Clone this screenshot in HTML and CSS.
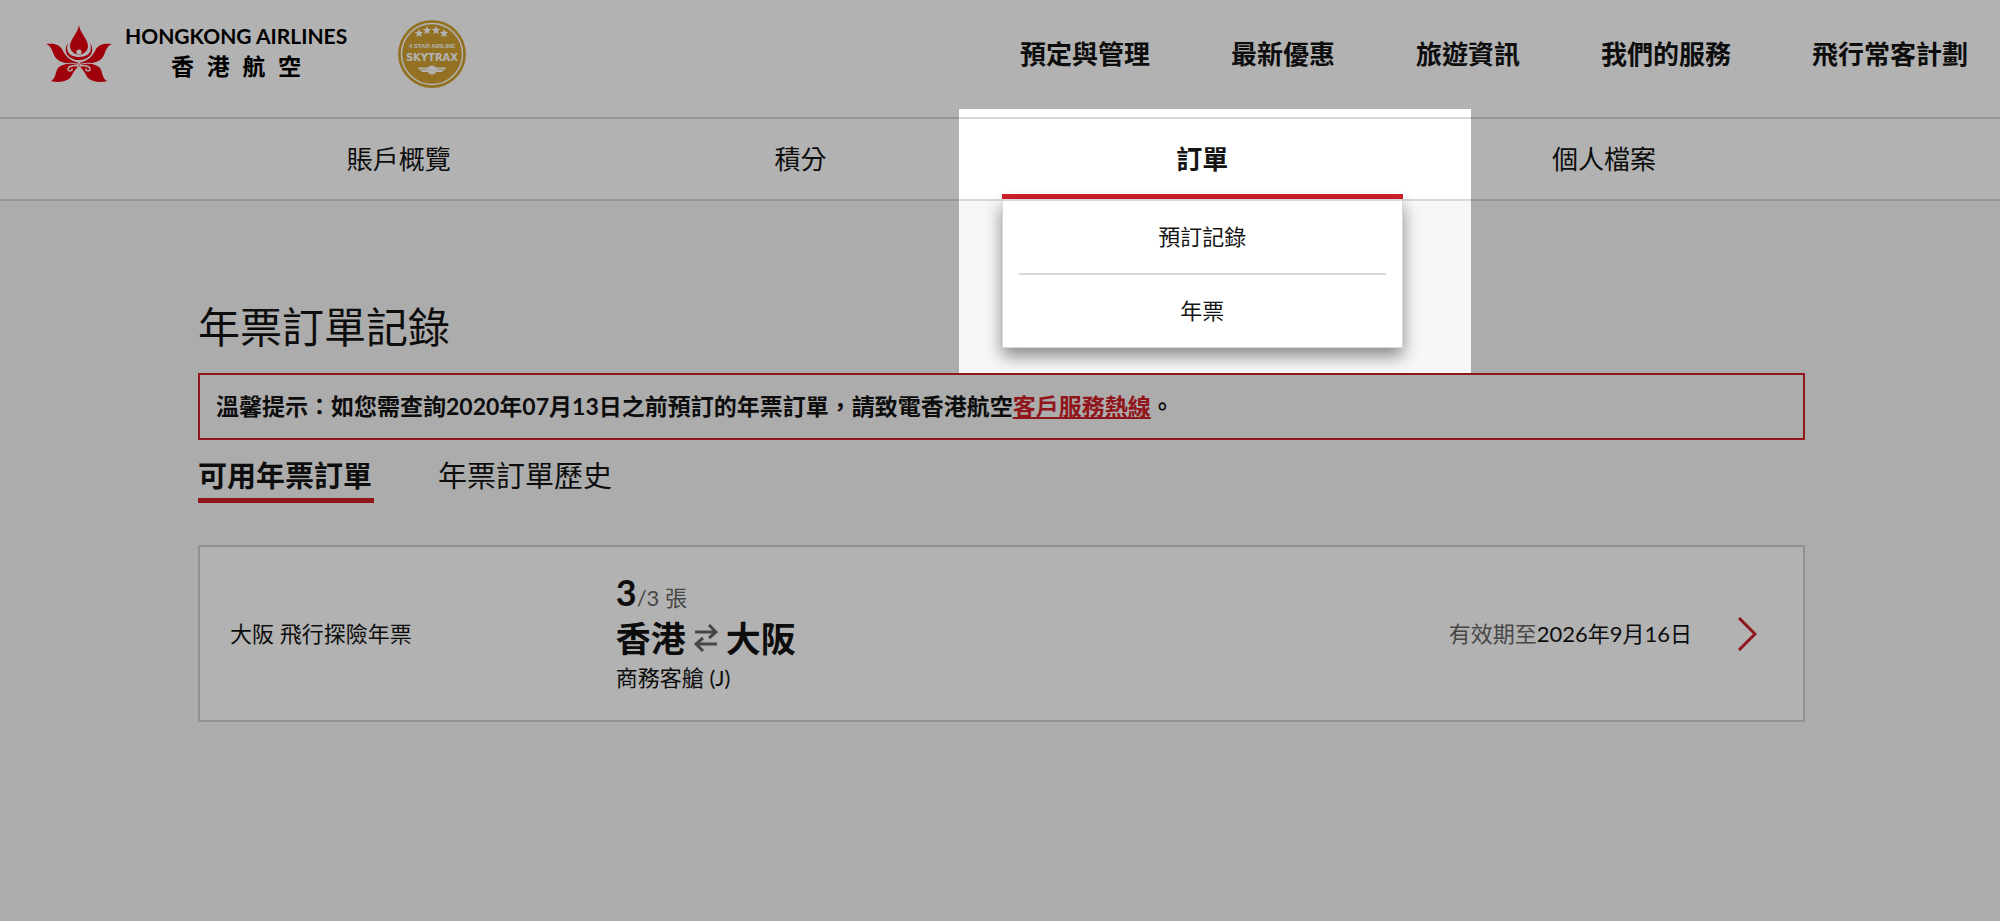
FILE: index.html
```html
<!DOCTYPE html>
<html lang="zh-Hant">
<head>
<meta charset="utf-8">
<meta name="viewport" content="width=device-width, initial-scale=1">
<title>年票訂單記錄 - 香港航空</title>
<link rel="stylesheet" href="styles.css">
</head>
<body>
<header class="header">
  <a class="logo" href="#">
    <svg class="logo-mark" viewBox="0 0 66 58" aria-hidden="true">
      <g fill="#e4000f">
        <path d="M0 19c7-1 13 0 16 5 3 7 8 12 17 14-12 2-22-1-25-8-2-5-3-9-8-11z"/>
        <path d="M66 19c-7-1-13 0-16 5-3 7-8 12-17 14 12 2 22-1 25-8 2-5 3-9 8-11z"/>
        <path d="M33 39c-6-2-16-1-21 4-3 5-2 10-7 13 6 2 15 1 19-3 3-4 4-8 9-12z"/>
        <path d="M33 39c6-2 16-1 21 4 3 5 2 10 7 13-6 2-15 1-19-3-3-4-4-8-9-12z"/>
      </g>
      <path d="M33 40c-7-3-17-2-21 2M33 40c7-3 17-2 21 2" fill="none" stroke="#fff" stroke-width="1"/>
      <path d="M32 41c-4-1-10 0-10 3 0 3 5 2 4 0M34 41c4-1 10 0 10 3 0 3-5 2-4 0" fill="none" stroke="#fff" stroke-width="1.500" stroke-linecap="round"/>
      <path d="M23 17c-7 11-1 19 10 19s17-8 10-19" fill="#fff"/>
      <path d="M22 18c-6 9 1 17 11 17s17-8 11-17c3 9-2 14-11 14s-14-5-11-14z" fill="#e4000f"/>
      <path d="M33 0c1 8 9 14 9 21 0 4-3 7-6 8-2 1-4 1-6 0-3-1-6-4-6-8 0-7 8-13 9-21z" fill="#e4000f"/>
      <circle cx="33" cy="27" r="2.600" fill="#fff"/>
    </svg>
    <span class="logo-text">
      <span class="logo-en">HONGKONG AIRLINES</span>
      <span class="logo-zh">香港航空</span>
    </span>
  </a>
  <svg class="skytrax" viewBox="0 0 68 68" role="img" aria-label="4 Star Airline Skytrax">
    <circle cx="34" cy="34" r="34" fill="#d2a432"/>
    <circle cx="34" cy="34" r="30.500" fill="none" stroke="#fff" stroke-width="1.500"/>
    <g fill="#fff">
      <path id="star" d="M21 9l1.200 2.800 3 .2-2.300 2 .8 3-2.700-1.600-2.700 1.600.8-3-2.300-2 3-.2z"/>
      <use href="#star" x="8" y="-3"/><use href="#star" x="17" y="-3"/><use href="#star" x="25"/>
      <text class="badge-star" x="34" y="28" text-anchor="middle">4 STAR AIRLINE</text>
      <text class="badge-name" x="34" y="41" text-anchor="middle">SKYTRAX</text>
      <circle cx="34" cy="50" r="4.500"/>
      <path d="M20 47.500h28l-1 2h-26zM22 50h24l-2 2h-20z"/>
    </g>
  </svg>
  <nav class="main-nav" aria-label="主選單">
    <a href="#">預定與管理</a>
    <a href="#">最新優惠</a>
    <a href="#">旅遊資訊</a>
    <a href="#">我們的服務</a>
    <a href="#">飛行常客計劃</a>
  </nav>
</header>

<nav class="account-nav" aria-label="會員">
  <ul class="account-list">
    <li><a href="#">賬戶概覽</a></li>
    <li><a href="#">積分</a></li>
    <li class="current">
      <a href="#">訂單</a>
      <div class="spotlight"></div>
      <ul class="dropdown">
        <li><a href="#">預訂記錄</a></li>
        <li><a href="#">年票</a></li>
      </ul>
    </li>
    <li><a href="#">個人檔案</a></li>
  </ul>
</nav>

<main class="content">
  <h1 class="title">年票訂單記錄</h1>
  <p class="notice">溫馨提示：如您需查詢2020年07月13日之前預訂的年票訂單，請致電香港航空<a href="#">客戶服務熱線</a>。</p>
  <div class="tabs" role="tablist">
    <button class="tab active" type="button" role="tab" aria-selected="true">可用年票訂單</button>
    <button class="tab" type="button" role="tab" aria-selected="false">年票訂單歷史</button>
  </div>
  <article class="card">
    <p class="pass-name">大阪 飛行探險年票</p>
    <div class="trip">
      <p class="count"><strong>3</strong>/3 張</p>
      <p class="route">香港
        <svg class="swap" viewBox="0 0 24 28" aria-hidden="true"><path d="M1 8h21M15 1l7 7-7 6M23 20H2M9 14l-7 6 7 7"/></svg>
        大阪</p>
      <p class="cabin">商務客艙 (J)</p>
    </div>
    <p class="expiry"><span>有效期至</span>2026年9月16日</p>
    <a class="open" href="#" aria-label="查看詳情"><svg viewBox="0 0 20 34" aria-hidden="true"><path d="M2 1l16 16-16 16"/></svg></a>
  </article>
</main>
</body>
</html>
```
FILE: styles.css
```css
* { box-sizing: border-box; }

:root {
  --red: #cf2029;
  --line: #d8d8d8;
  --ink: #141414;
}

html { overflow: hidden; }

body {
  margin: 0;
  min-height: 100vh;
  background: #f7f7f7;
  color: var(--ink);
  font: 22px/32px Lato, "Noto Sans CJK TC", sans-serif;
}

a { color: inherit; text-decoration: none; }
p, h1, ul { margin: 0; padding: 0; }
ul { list-style: none; }

.header {
  display: flex;
  align-items: center;
  height: 117px;
  padding: 0 32px 10px 46px;
  background: #fff;
}

.logo { display: flex; align-items: center; gap: 13px; color: #000; }
.logo-mark { width: 66px; height: 58px; }
.logo-text { display: flex; flex-direction: column; align-items: center; padding-bottom: 5px; }
.logo-en { font-size: 21px; font-weight: 700; line-height: 30px; white-space: nowrap; }
.logo-zh {
  width: 130px;
  font-size: 23px;
  font-weight: 700;
  line-height: 30px;
  text-align-last: justify;
}

.skytrax { width: 68px; height: 68px; margin-left: 51px; }
.badge-star { font: 700 6px "Liberation Sans", sans-serif; }
.badge-name { font: 700 10px "DejaVu Sans", sans-serif; }

.main-nav {
  display: flex;
  gap: 81px;
  margin-left: auto;
  font-size: 26px;
  font-weight: 700;
  white-space: nowrap;
}

.account-nav {
  background: #fff;
  border-top: 2px solid var(--line);
  border-bottom: 2px solid var(--line);
}

.account-list {
  display: grid;
  grid-template-columns: repeat(4, 1fr);
  margin: 0 195px 0 198px;
  font-size: 26px;
  text-align: center;
}

.account-list > li { position: relative; }
.account-list > li > a { display: block; line-height: 80px; }
.current > a { font-weight: 700; box-shadow: inset 0 -5px var(--red); }

.spotlight {
  position: absolute;
  z-index: 3;
  top: -10px;
  left: -43px;
  right: -68px;
  height: 264px;
  box-shadow: 0 0 0 3000px rgba(0, 0, 0, .3);
  pointer-events: none;
}

.dropdown {
  position: absolute;
  z-index: 2;
  top: 80px;
  left: 0;
  right: 0;
  padding: 0 16px;
  background: #fff;
  border: 1px solid var(--line);
  border-top-width: 2px;
  box-shadow: 0 8px 16px rgba(0, 0, 0, .45);
  font-size: 22px;
}

.dropdown a { display: block; line-height: 72px; }
.dropdown li + li { border-top: 2px solid var(--line); }

.content { margin: 0 195px 0 198px; padding-top: 94px; }

.title { font-size: 42px; font-weight: 400; line-height: 64px; }

.notice {
  margin-top: 14px;
  padding: 15px 16px 16px;
  border: 2px solid var(--red);
  font-size: 23px;
  font-weight: 700;
}

.notice a { color: var(--red); text-decoration: underline; }

.tabs { display: flex; gap: 64px; margin-top: 16px; }

.tab {
  padding: 0 2px 2px 0;
  border: 0;
  border-bottom: 5px solid transparent;
  background: none;
  color: inherit;
  font: 29px/40px Lato, "Noto Sans CJK TC", sans-serif;
}

.tab.active { border-color: var(--red); font-weight: 700; }

.card {
  display: grid;
  grid-template-columns: 25% 1fr auto auto;
  align-items: center;
  margin-top: 42px;
  padding: 24px 30px;
  background: #fff;
  border: 2px solid #d0d0d0;
}

.trip { padding-top: 3px; }
.count { line-height: 36px; color: #666; }
.count strong { color: var(--ink); font-size: 36px; }

.route {
  display: flex;
  align-items: center;
  gap: 8px;
  font-size: 35px;
  font-weight: 700;
  line-height: 44px;
}

.swap { width: 24px; height: 28px; fill: none; stroke: #666; stroke-width: 3; }
.cabin { line-height: 36px; }
.expiry { text-align: right; }
.expiry span { color: #666; }
.open { display: flex; margin: 0 16px 0 45px; }
.open svg { width: 20px; height: 34px; fill: none; stroke: var(--red); stroke-width: 3; }
```
